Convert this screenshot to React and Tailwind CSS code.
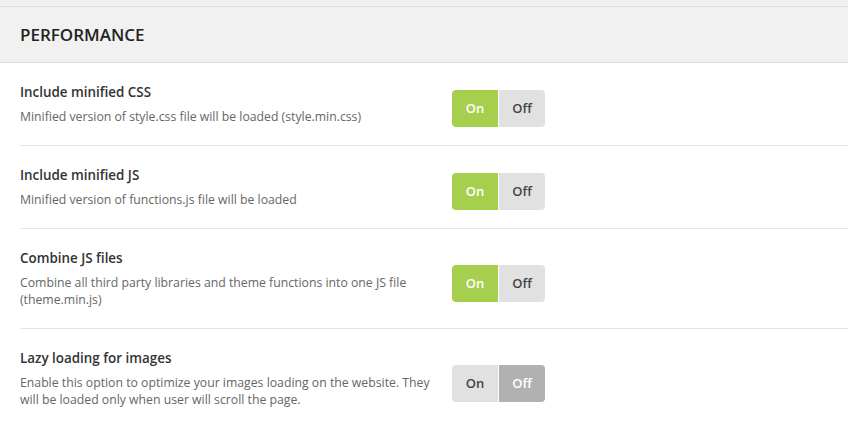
import { useState } from "react";

const options = [
  {
    id: "css",
    title: "Include minified CSS",
    desc: "Minified version of style.css file will be loaded (style.min.css)",
    on: true,
  },
  {
    id: "js",
    title: "Include minified JS",
    desc: "Minified version of functions.js file will be loaded",
    on: true,
  },
  {
    id: "combine",
    title: "Combine JS files",
    desc: "Combine all third party libraries and theme functions into one JS file (theme.min.js)",
    on: true,
  },
  {
    id: "lazy",
    title: "Lazy loading for images",
    desc: "Enable this option to optimize your images loading on the website. They will be loaded only when user will scroll the page.",
    on: false,
  },
];

const Toggle = ({ value, onChange }) => (
  <div className="mt-[5px] mb-[-5px] flex shrink-0 gap-[1px] text-[13px] font-semibold leading-none">
    <button
      onClick={() => onChange(true)}
      className={
        value
          ? "flex h-[37px] w-[46px] items-center justify-center rounded-l-[4px] bg-[#a5cf4c] text-white"
          : "flex h-[37px] w-[46px] items-center justify-center rounded-l-[4px] bg-[#e1e1e1] text-[#444]"
      }
    >
      On
    </button>
    <button
      onClick={() => onChange(false)}
      className={
        value
          ? "flex h-[37px] w-[46px] items-center justify-center rounded-r-[4px] bg-[#e1e1e1] text-[#444]"
          : "flex h-[37px] w-[46px] items-center justify-center rounded-r-[4px] bg-[#b1b1b1] text-white"
      }
    >
      Off
    </button>
  </div>
);

export default function App() {
  const [state, setState] = useState(
    Object.fromEntries(options.map((o) => [o.id, o.on]))
  );

  return (
    <div className="min-h-screen bg-white font-['Open_Sans',sans-serif]">
      <div className="h-[7px] border-b border-[#dcdcdc] bg-[#f1f1f1]" />
      <div className="flex h-[56px] items-center border-b border-[#dcdcdc] bg-[#f1f1f1] px-5">
        <h2 className="text-[17px] font-semibold text-[#222]">PERFORMANCE</h2>
      </div>

      <div className="pl-5">
        {options.map((o, i) => (
          <div
            key={o.id}
            className={
              i < options.length - 1
                ? "flex items-center border-b border-[#e5e5e5] pt-[19px] pb-[20px]"
                : "flex items-center pt-[19px] pb-[20px]"
            }
          >
            <div className="w-[426px] shrink-0">
              <div className="text-[13.4px] leading-[20px] font-semibold text-[#333]">
                {o.title}
              </div>
              <div className="mt-[6px] text-[12.25px] leading-[17px] text-[#666]">
                {o.desc}
              </div>
            </div>
            <div className="ml-[6px]">
              <Toggle
                value={state[o.id]}
                onChange={(v) => setState((s) => ({ ...s, [o.id]: v }))}
              />
            </div>
          </div>
        ))}
      </div>
    </div>
  );
}
